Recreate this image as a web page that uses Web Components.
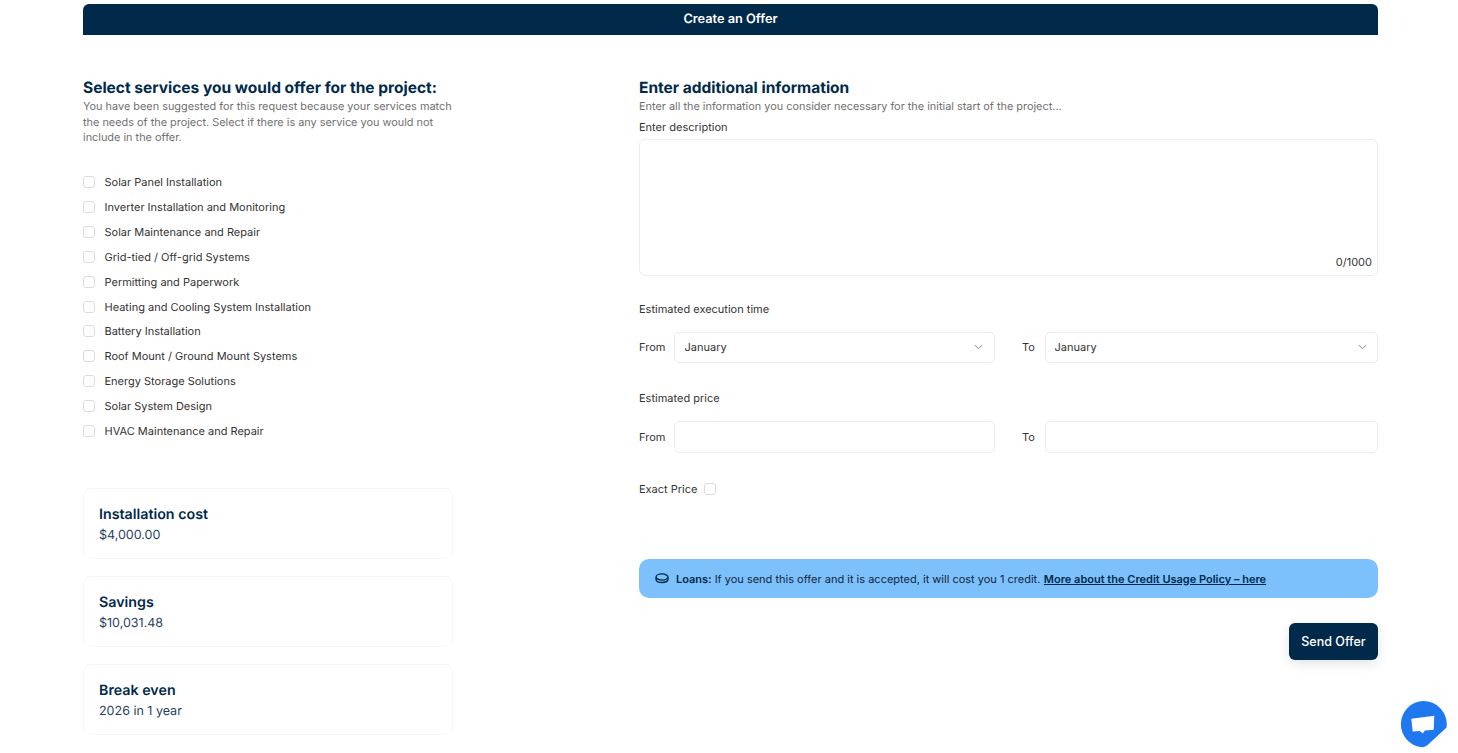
<!DOCTYPE html>
<html lang="en">
<head>
<meta charset="utf-8">
<title>Create an Offer</title>
<style>
  html, body { margin: 0; background: #fff; }
  body { font-family: Inter, "Liberation Sans", sans-serif; color: #333; text-rendering: geometricPrecision; }
</style>
</head>
<body>
<offer-page>
  <offer-header>Create an Offer</offer-header>

  <div slot="left">
    <section-title heading="Select services you would offer for the project:">You have been suggested for this request because your services match the needs of the project. Select if there is any service you would not include in the offer.</section-title>
    <service-list>
      <check-row>Solar Panel Installation</check-row>
      <check-row>Inverter Installation and Monitoring</check-row>
      <check-row>Solar Maintenance and Repair</check-row>
      <check-row>Grid-tied / Off-grid Systems</check-row>
      <check-row>Permitting and Paperwork</check-row>
      <check-row>Heating and Cooling System Installation</check-row>
      <check-row>Battery Installation</check-row>
      <check-row>Roof Mount / Ground Mount Systems</check-row>
      <check-row>Energy Storage Solutions</check-row>
      <check-row>Solar System Design</check-row>
      <check-row>HVAC Maintenance and Repair</check-row>
    </service-list>
    <stat-card heading="Installation cost">$4,000.00</stat-card>
    <stat-card heading="Savings">$10,031.48</stat-card>
    <stat-card heading="Break even">2026 in 1 year</stat-card>
  </div>

  <div slot="right">
    <section-title heading="Enter additional information">Enter all the information you consider necessary for the initial start of the project...</section-title>
    <description-box label="Enter description" count="0/1000"></description-box>
    <range-row label="Estimated execution time" kind="select" value="January"></range-row>
    <range-row label="Estimated price" kind="input"></range-row>
    <exact-price>Exact Price</exact-price>
    <credit-notice></credit-notice>
    <send-button>Send Offer</send-button>
  </div>
</offer-page>
<chat-bubble></chat-bubble>

<script>
'use strict';

// ── Helper: every element is a shadow root + a css/markup string ──
function define(name, css, markup, setup) {
  customElements.define(name, class extends HTMLElement {
    constructor() {
      super();
      this.attachShadow({ mode: 'open' });
    }
    connectedCallback() {
      const body = typeof markup === 'function' ? markup(this) : markup;
      this.shadowRoot.innerHTML = `<style>${css}</style>${body}`;
      if (setup) setup(this);
    }
  });
}

define('offer-page', `
  :host { display: block; padding: 4px 80px 0 83px; }
  .cols { display: grid; grid-template-columns: 370px 739px; justify-content: space-between; margin-top: 43px; }
`, `<slot></slot><div class="cols"><slot name="left"></slot><slot name="right"></slot></div>`);

define('offer-header', `
  :host { display: block; height: 31px; line-height: 31px; text-align: center; background: #012a4a;
    color: #fff; font-size: 12.75px; font-weight: 600; border-radius: 6px 6px 0 0; }
`, `<slot></slot>`);

define('section-title', `
  :host { display: block; }
  h2 { margin: 0 0 2px; font-size: 15.5px; line-height: 19px; font-weight: 700; color: #012a4a; }
  p { margin: 0; font-size: 10.9px; line-height: 15.5px; color: #707070; }
`, el => `<h2>${el.getAttribute('heading')}</h2><p><slot></slot></p>`);

define('service-list', `
  :host { display: flex; flex-direction: column; gap: 4.9px; margin: 26.6px 0 47px; }
`, `<slot></slot>`);

define('check-row', `
  :host { display: flex; align-items: center; gap: 9.5px; height: 20px; font-size: 11px; color: #333; }
  i { box-sizing: border-box; width: 12px; height: 12px; border: 1.5px solid #dcdcdc; border-radius: 3px; }
`, `<i></i><slot></slot>`);

define('stat-card', `
  :host { display: block; box-sizing: border-box; height: 71px; padding: 16px 15px; margin-bottom: 17px;
    border: 1px solid #f6f6f7; border-radius: 8px; }
  b { display: block; font-size: 14.25px; line-height: 20px; font-weight: 600; color: #012a4a; }
  span { display: block; font-size: 12.5px; line-height: 21px; color: #1f4263; }
`, el => `<b>${el.getAttribute('heading')}</b><span><slot></slot></span>`);

define('description-box', `
  :host { display: block; }
  label { display: block; font-size: 11px; line-height: 16px; color: #333; margin: 4px 0 4px; }
  div { box-sizing: border-box; height: 137px; border: 1px solid #ececec; border-radius: 6px; position: relative; }
  span { position: absolute; right: 5px; bottom: 6px; font-size: 11px; line-height: 14px; color: #333; }
`, el => `<label>${el.getAttribute('label')}</label><div><span>${el.getAttribute('count')}</span></div>`);

define('range-row', `
  :host { display: block; margin-top: 25px; }
  :host([kind="input"]) { margin-top: 27px; }
  label { display: block; font-size: 11px; line-height: 16px; color: #333; margin-bottom: 15px; }
  .row { display: flex; align-items: center; font-size: 11px; color: #333; }
  .tag { width: 35px; flex: none; }
  .to { width: 23px; margin-left: 27px; flex: none; }
  .field { box-sizing: border-box; height: 31px; border: 1px solid #ececec; border-radius: 5px;
    display: flex; align-items: center; justify-content: space-between; padding: 0 11px 0 9.5px; }
  :host([kind="input"]) .field { height: 32px; }
  .a { width: 321px; flex: none; }
  .b { flex: 1; padding-left: 8.5px; padding-right: 10px; }
  svg { display: block; }
`, el => {
  const kind = el.getAttribute('kind');
  const value = el.getAttribute('value') || '';
  const inner = kind === 'select'
    ? `<span>${value}</span><svg width="9" height="6" viewBox="0 0 9 6" fill="none" stroke="#8a8a8a" stroke-width="1"><path d="M.8 1l3.7 3.6L8.2 1"/></svg>`
    : '';
  return `<label>${el.getAttribute('label')}</label>
    <div class="row"><span class="tag">From</span><div class="field a">${inner}</div>
    <span class="to">To</span><div class="field b">${inner}</div></div>`;
});

define('exact-price', `
  :host { display: flex; align-items: center; gap: 7px; margin-top: 28px; font-size: 11px; line-height: 16px; color: #333; }
  i { box-sizing: border-box; width: 12px; height: 12px; border: 1.5px solid #dcdcdc; border-radius: 3px; }
`, `<slot></slot><i></i>`);

define('credit-notice', `
  :host { display: flex; align-items: center; box-sizing: border-box; height: 39px; margin-top: 62px; padding: 1px 16px 0;
    background: #7cc0fc; border-radius: 10px; font-size: 11px; color: #12263a; }
  svg { flex: none; margin-right: 7px; }
  b { font-weight: 600; color: #012a4a; margin-right: 3px; }
  a { font-weight: 600; color: #012a4a; text-decoration: underline; margin-left: 3.5px; }
`, `<svg width="14" height="11" viewBox="0 0 14 11" fill="none" stroke="#012a4a" stroke-width="1.4">
    <ellipse cx="7" cy="4" rx="5.9" ry="3.1"/><path d="M1.1 4v2.5c0 1.7 2.6 3 5.9 3s5.9-1.3 5.9-3V4"/></svg>
  <b>Loans:</b><span>If you send this offer and it is accepted, it will cost you 1 credit.</span>
  <a>More about the Credit Usage Policy – here</a>`);

define('send-button', `
  :host { display: flex; justify-content: flex-end; margin-top: 25px; }
  button { box-sizing: border-box; width: 89px; height: 37px; border: 0; padding: 0; border-radius: 6px;
    background: #012a4a; color: #fff; font: 500 12.5px Inter, sans-serif; box-shadow: 0 4px 12px rgba(1,42,74,.12); }
`, `<button><slot></slot></button>`);

define('chat-bubble', `
  :host { position: fixed; left: 1400px; top: 701px; width: 47px; height: 47px; }
  svg { display: block; }
`, `<svg width="47" height="47" viewBox="0 0 47 47">
    <path fill="#1f78f0" d="M23.5 0A23.4 23.4 0 0 1 46.8 23.5L46.6 26Q46.5 27 45 28L27 44.5Q24 46.5 22 46.3A23.2 23.2 0 0 1 23.5 0Z"/>
    <path fill="#fff" d="M11.3 17.7L34.3 14.7 33.7 28.7 25 29.6 22.7 32.6 20 30 12.7 30.6Z"/></svg>`);
</script>
</body>
</html>
